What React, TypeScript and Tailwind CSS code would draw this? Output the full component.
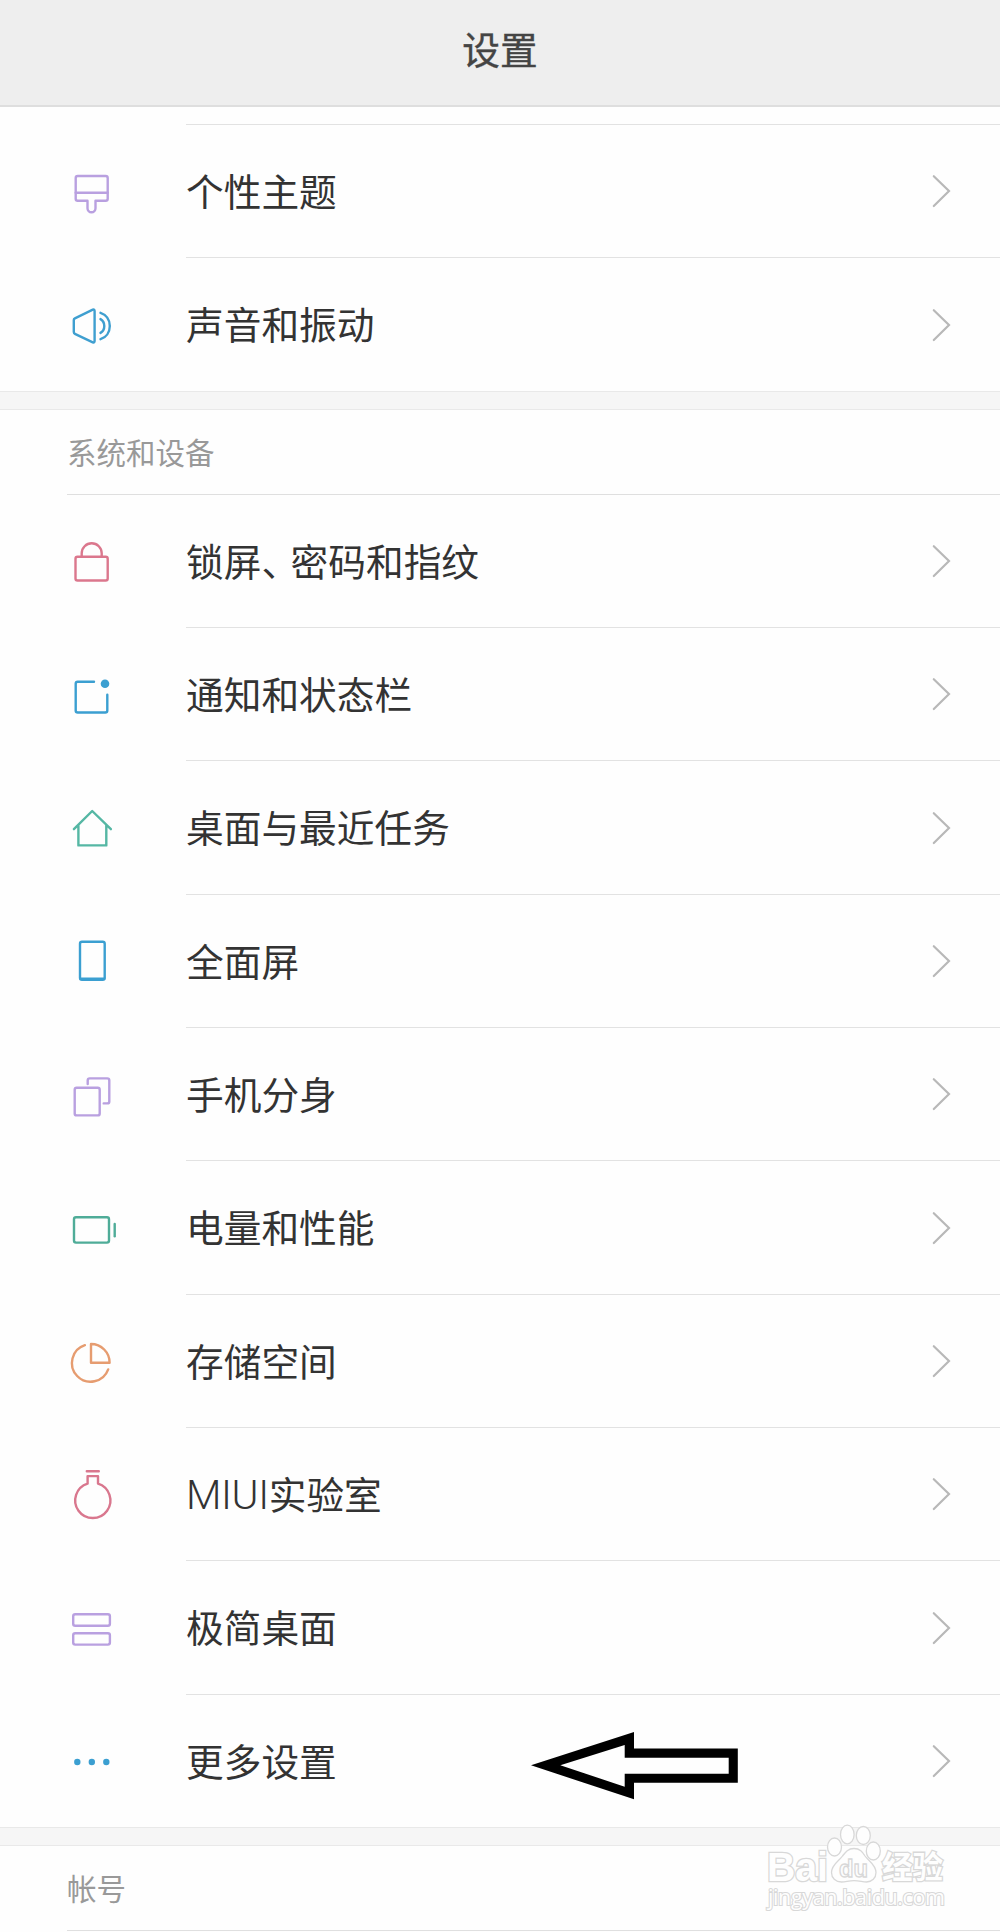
import type { ReactNode } from "react";

interface SettingItem {
  title: ReactNode;
  color: string;
  icon: ReactNode;
  pointed?: boolean;
}

const personalItems: SettingItem[] = [
  {
    title: "个性主题",
    color: "text-[#b9a0e0]",
    icon: (
      <>
        <path d="M15.7 14h28a2 2 0 0 1 2 2v20.7a2 2 0 0 1-2 2H33.5v7.6a4 4 0 0 1-8 0v-7.6H15.7a2 2 0 0 1-2-2V16a2 2 0 0 1 2-2z" />
        <path d="M13.7 30.7h32" />
      </>
    ),
  },
  {
    title: "声音和振动",
    color: "text-[#3f9fd0]",
    icon: (
      <>
        <path d="M12.9 23.3 30.8 14.7q1.8-.6 1.8 1.3v30q0 1.9-1.8 1.3L12.9 38.8q-1.1-.5-1.1-1.7V25q0-1.2 1.1-1.7z" />
        <path d="M38.5 17.8c5.6 1.8 9.3 7 9.3 13.2s-3.7 11.4-9.3 13.2M38.5 24.1c2.6 1.5 3.8 4 3.8 6.9s-1.2 5.4-3.8 6.9" />
      </>
    ),
  },
];

const systemItems: SettingItem[] = [
  {
    title: (
      <>
        锁屏<span className="tracking-[-8.5px]">、</span>密码和指纹
      </>
    ),
    color: "text-[#db778d]",
    icon: (
      <>
        <rect x="13.5" y="25.8" width="32.2" height="23.7" rx="2" />
        <path d="M19.7 25.5v-3.2a10 10 0 0 1 20 0v3.2" />
      </>
    ),
  },
  {
    title: "通知和状态栏",
    color: "text-[#3b9fd1]",
    icon: (
      <>
        <path d="M32 16.8H15.7a2 2 0 0 0-2 2v26.7a2 2 0 0 0 2 2h27.6a2 2 0 0 0 2-2V29.7" />
        <circle cx="43" cy="18.8" r="4.3" fill="currentColor" stroke="none" />
      </>
    ),
  },
  {
    title: "桌面与最近任务",
    color: "text-[#55b7a4]",
    icon: <path d="M11.9 31.2 30.2 13 48.9 31.2M16.4 27.5v19.9h27.9V27.5" />,
  },
  {
    title: "全面屏",
    color: "text-[#3b9fd1]",
    icon: (
      <>
        <rect x="18" y="10.8" width="24.7" height="38" rx="2" />
        <path d="M18.5 47.8h23.7" />
      </>
    ),
  },
  {
    title: "手机分身",
    color: "text-[#b9a0e0]",
    icon: (
      <>
        <rect x="12.7" y="22.7" width="25" height="27.7" rx="2" />
        <path d="M25.7 19v-3.6a2 2 0 0 1 2-2h17.6a2 2 0 0 1 2 2v21a2 2 0 0 1-2 2h-3.6" />
      </>
    ),
  },
  {
    title: "电量和性能",
    color: "text-[#4fac98]",
    icon: (
      <>
        <rect x="12" y="19.3" width="35" height="25.3" rx="2" />
        <path d="M52.7 26v12.2" />
      </>
    ),
  },
  {
    title: "存储空间",
    color: "text-[#e69c70]",
    icon: (
      <>
        <path d="M22.9 14.2a18.7 18.7 0 1 0 23.3 24.2" />
        <path d="M29 13v18.7h18.6A18.6 18.6 0 0 0 29 13z" />
      </>
    ),
  },
  {
    title: (
      <>
        <span className="font-['Roboto'] text-[41px] font-light leading-[0] tracking-[-0.4px]">MIUI</span>实验室
      </>
    ),
    color: "text-[#d9778e]",
    icon: <path d="M24.8 6.3h12M25.6 18.6v-7.5h10.4v7.5a17.6 17.6 0 1 1-10.4 0" />,
  },
  {
    title: "极简桌面",
    color: "text-[#b9a0e0]",
    icon: (
      <>
        <rect x="11.2" y="16.3" width="36.7" height="11.4" rx="2" />
        <rect x="11.2" y="35.2" width="36.7" height="11.4" rx="2" />
      </>
    ),
  },
  {
    title: "更多设置",
    color: "text-[#3b9fd1]",
    icon: (
      <g fill="currentColor" stroke="none">
        <circle cx="15.3" cy="31" r="3.2" />
        <circle cx="29.8" cy="31" r="3.2" />
        <circle cx="44.3" cy="31" r="3.2" />
      </g>
    ),
    pointed: true,
  },
];

function Chevron() {
  return (
    <svg className="ml-auto h-9 w-5 text-[#b8b8b8]" viewBox="0 0 20 36" fill="none" stroke="currentColor" strokeWidth={2.2} strokeLinecap="round">
      <path d="M2.8 3.2 18 18 2.8 33" />
    </svg>
  );
}

// Black outline arrow laid over the row that should be tapped
function PointerArrow() {
  return (
    <svg className="absolute left-[531px] top-[36px] h-[70px] w-[208px]" viewBox="531 1731 208 70">
      <path
        fillRule="evenodd"
        d="M531 1765.3 634 1732v16.5h103.8v34.2H634v16.6zM560.3 1765.3l64.4 21.4v-13h104v-16h-104V1745z"
      />
    </svg>
  );
}

function SettingRow({ item, divided }: { item: SettingItem; divided: boolean }) {
  return (
    <div className="relative flex h-[133.35px] items-stretch pl-[62px]">
      <div className={`flex w-[124px] shrink-0 items-center ${item.color}`}>
        <svg className="h-[60px] w-[60px]" viewBox="0 0 60 60" fill="none" stroke="currentColor" strokeWidth={2.4} strokeLinecap="round" strokeLinejoin="round">
          {item.icon}
        </svg>
      </div>
      <div className={`flex grow items-center border-b pr-[49px] ${divided ? "border-[#e2e2e2]" : "border-transparent"}`}>
        <span className="whitespace-nowrap pb-[3px] text-[37.7px] leading-none text-[#333]">{item.title}</span>
        <Chevron />
      </div>
      {item.pointed && <PointerArrow />}
    </div>
  );
}

function SettingList({ items }: { items: SettingItem[] }) {
  return (
    <div>
      {items.map((item, i) => (
        <SettingRow key={i} item={item} divided={i < items.length - 1} />
      ))}
    </div>
  );
}

function SectionTitle({ children }: { children: ReactNode }) {
  return (
    <>
      <div className="-mt-px h-[19px] border-y border-[#e9e9e9] bg-[#f6f6f6]" />
      <h2 className="ml-[67px] flex h-[85px] items-center border-b border-[#dfdfdf] text-[29.5px] leading-none text-[#999]">
        {children}
      </h2>
    </>
  );
}

function Watermark() {
  return (
    <svg
      className="absolute left-[760px] top-[1818px] h-[100px] w-[196px]"
      viewBox="760 1818 196 100"
      fill="#fefefe"
      stroke="#d8d8d8"
      strokeWidth={1.3}
      fontFamily="'Liberation Sans', 'Noto Sans CJK SC', sans-serif"
    >
      <g paintOrder="stroke" fontWeight="bold" strokeWidth={2.6}>
        <text x="767" y="1880.5" fontSize="41" textLength="61" lengthAdjust="spacingAndGlyphs">Bai</text>
        <text x="882" y="1877.5" fontSize="31" textLength="61" lengthAdjust="spacingAndGlyphs">经验</text>
      </g>
      <ellipse cx="834.5" cy="1847" rx="7" ry="9" />
      <ellipse cx="847.3" cy="1834.5" rx="6.8" ry="9.3" />
      <ellipse cx="863.3" cy="1835.5" rx="7" ry="9" />
      <ellipse cx="873.3" cy="1851" rx="7" ry="9" />
      <path d="M854 1848.5c6 0 8.5 3.5 11 7.5 3.5 5 11 8.5 11 16.5 0 5.5-4 9.5-9.5 9.5-4 0-7-1.3-12.5-1.3s-8 1.3-12.5 1.3c-6 0-10-4-10-9.5 0-8 7.5-11.5 11-16.5 3-4 5.5-7.5 11.5-7.5z" />
      <text x="839" y="1876.5" fontSize="24" fontWeight="bold" textLength="29" lengthAdjust="spacingAndGlyphs">du</text>
      <text x="768" y="1904.5" fontSize="21.5" paintOrder="stroke" strokeWidth={2.2} textLength="177" fontFamily="'Open Sans', sans-serif">jingyan.baidu.com</text>
    </svg>
  );
}

export default function App() {
  return (
    <div lang="zh-CN" className="relative h-[1932px] w-[1000px] overflow-hidden bg-[#fefefe] font-['Noto_Sans_CJK_SC',sans-serif]">
      <header className="flex h-[107px] items-center justify-center border-b-2 border-[#dedede] bg-[#eee] pb-[9px] text-[37.7px] leading-none text-[#444] [-webkit-text-stroke:0.4px_#444]">
        设置
      </header>
      <div className="ml-[186px] h-[18px] border-b border-[#e2e2e2]" />
      <SettingList items={personalItems} />
      <SectionTitle>系统和设备</SectionTitle>
      <SettingList items={systemItems} />
      <SectionTitle>帐号</SectionTitle>
      <Watermark />
    </div>
  );
}
